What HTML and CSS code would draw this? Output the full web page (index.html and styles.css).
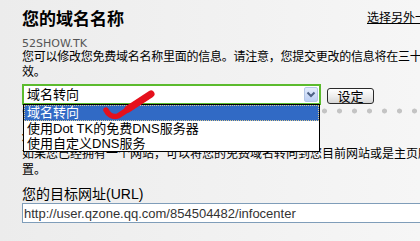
FILE: index.html
```
<!DOCTYPE html>
<html lang="zh-CN">
<head>
<meta charset="utf-8">
<title>您的域名名称</title>
<link rel="stylesheet" href="styles.css">
</head>
<body>
<div class="page">
  <div class="head">
    <h1 class="title">您的域名名称</h1>
    <a class="switch" href="#">选择另外一个域名</a>
  </div>
  <div class="domain">52SHOW.TK</div>
  <p class="intro">您可以修改您免费域名名称里面的信息。请注意，您提交更改的信息将在三十分钟内生效。</p>
  <div class="form-row">
    <div class="select">
      <div class="select-value">域名转向</div>
      <span class="select-arrow"><svg width="12" height="13" viewBox="0 0 12 13"><path d="M2.5 4.5 L6 8 L9.5 4.5" fill="none" stroke="#4d6185" stroke-width="2"/></svg></span>
      <ul class="select-list">
        <li class="active">域名转向</li>
        <li>使用Dot TK的免费DNS服务器</li>
        <li>使用自定义DNS服务</li>
      </ul>
    </div>
    <button class="btn" type="button">设定</button>
  </div>
  <div class="dots"></div>
  <div class="option">
    <div class="option-title">域名转向</div>
    <p class="option-text">如果您已经拥有一个网站，可以将您的免费域名转向到您目前网站或是主页所在的位置。</p>
  </div>
  <label class="field-label" for="url">您的目标网址(URL)</label>
  <input class="url" id="url" type="text" value="http://user.qzone.qq.com/854504482/infocenter">
  <svg class="mark" width="58" height="34" viewBox="0 0 58 34"><path d="M6 22 C 8 26, 12 30, 18 28 L 50 7" fill="none" stroke="#e5101c" stroke-width="5.5" stroke-linecap="round" stroke-linejoin="round"/><path d="M28 21 L 51 6" fill="none" stroke="#e5101c" stroke-width="7" stroke-linecap="round"/></svg>
</div>
</body>
</html>
```
FILE: styles.css
```
html, body {
  margin: 0;
  height: 241px;
  overflow: hidden;
}
body {
  background: linear-gradient(to right, #ececec, #f6f6f6);
  font-family: "Liberation Sans", "Noto Sans CJK SC", sans-serif;
  color: #000;
}
.page {
  position: relative;
  width: 448px;
  padding: 10px 0 0 22px;
}
.head {
  display: flex;
  justify-content: space-between;
  align-items: flex-start;
}
.title {
  margin: 0;
  font-size: 17px;
  line-height: 20px;
  font-weight: bold;
}
.switch {
  margin-top: 1px;
  margin-right: 7px;
  font-size: 12px;
  line-height: 15px;
  color: #000;
  text-decoration: underline;
}
.domain {
  margin-top: 7px;
  font: 11px/13px "DejaVu Sans", sans-serif;
  color: #555;
}
.intro {
  margin: 0;
  font-size: 12px;
  line-height: 15px;
  letter-spacing: -0.25px;
}
.form-row {
  display: flex;
  align-items: flex-start;
  gap: 6px;
  margin-top: 4px;
}
.select {
  position: relative;
  width: 295px;
  height: 17px;
  border: 2px solid #5cbb2e;
  background: #fff;
  display: flex;
  align-items: center;
  justify-content: space-between;
}
.select-value {
  font-size: 13px;
  line-height: 17px;
  padding-left: 3px;
}
.select-arrow {
  box-sizing: border-box;
  width: 14px;
  height: 15px;
  margin-right: 1px;
  border: 1px solid #b5c7e6;
  border-radius: 2px;
  background: linear-gradient(#e4ecfc, #bccff4);
  display: flex;
  align-items: center;
  justify-content: center;
}
.select-list {
  position: absolute;
  top: 18px;
  left: -1px;
  right: -1px;
  margin: 0;
  padding: 0;
  list-style: none;
  border: 1px solid #000;
  background: #fff;
  z-index: 2;
}
.select-list li {
  height: 15px;
  font-size: 13px;
  line-height: 15px;
  padding-left: 3px;
}
.select-list li.active {
  height: 16px;
  line-height: 16px;
  background: #316ac5;
  color: #fff;
  outline: 1px dotted #d8c890;
  outline-offset: -1px;
}
.btn {
  margin-top: 4px;
  width: 47px;
  height: 16px;
  padding: 0;
  border: 1px solid #2a2a2a;
  border-radius: 3px;
  background: linear-gradient(#ffffff, #ececec 55%, #d6d6d6);
  font: 13px/14px "Noto Sans CJK SC", sans-serif;
  color: #000;
}
.dots {
  margin-top: 3px;
  height: 6px;
  background: radial-gradient(circle at 2.5px 3px, #c4c4c4 2.2px, transparent 2.8px) 0 0 / 15px 6px repeat-x;
}
.option {
  margin-top: 16px;
  font-size: 12px;
  line-height: 16px;
}
.option-title {
  font-weight: bold;
}
.option-text {
  margin: 0;
}
.field-label {
  display: block;
  margin-top: 8px;
  font-size: 14px;
  line-height: 17px;
}
.url {
  display: block;
  box-sizing: border-box;
  width: 448px;
  height: 20px;
  margin: 0;
  padding: 0 1px;
  border: 1px solid #7f9db9;
  background: #fff;
  font: 13px "Liberation Sans", sans-serif;
  color: #333;
  outline: none;
}
.mark {
  position: absolute;
  left: 100px;
  top: 88px;
  z-index: 3;
  pointer-events: none;
}
```
